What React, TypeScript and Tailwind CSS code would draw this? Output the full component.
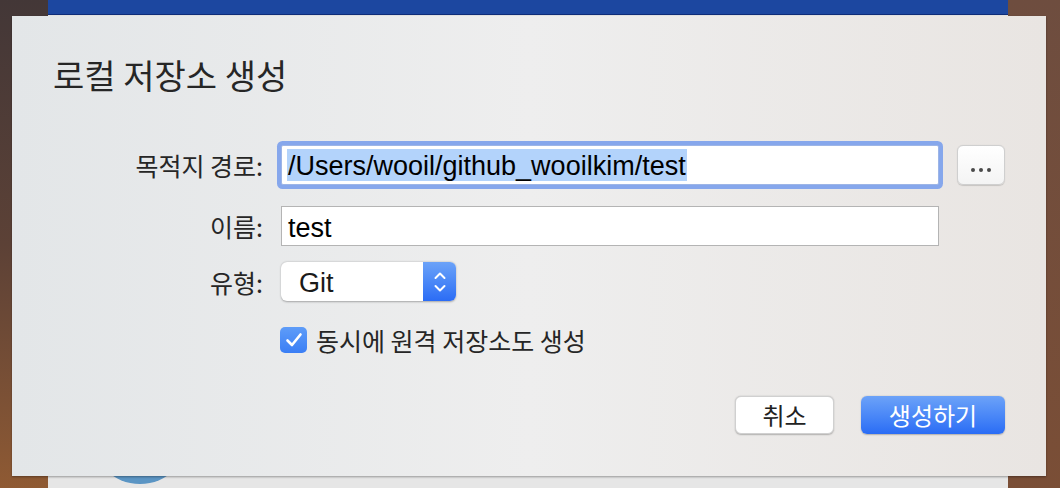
import React from 'react';

const KR = { fontFamily: '"Noto Sans CJK KR", "Noto Sans", sans-serif' };
const LATIN = { fontFamily: '"Liberation Sans", "Noto Sans CJK KR", sans-serif' };

const Chevrons = () => (
  <svg width="14" height="24" viewBox="0 0 14 24" fill="none" stroke="white" strokeWidth="2" strokeLinecap="round" strokeLinejoin="round">
    <path d="M2.5 8 L7 3.5 L11.5 8" />
    <path d="M2.5 16 L7 20.5 L11.5 16" />
  </svg>
);

const Check = () => (
  <svg width="18" height="16" viewBox="0 0 18 16" fill="none" stroke="white" strokeWidth="2.6" strokeLinecap="round" strokeLinejoin="round">
    <path d="M2.5 8.5 L7 13 L15.5 2.5" />
  </svg>
);

const Label: React.FC<{ children: React.ReactNode }> = ({ children }) => (
  <div className="w-[210px] shrink-0 text-right text-[25px] leading-[32px] text-[#262626]" style={KR}>
    {children}
  </div>
);

export default function App() {
  return (
    <div className="relative w-[1060px] h-[488px] overflow-hidden bg-gradient-to-b from-[#433737] via-[#5c4136] to-[#8f5a33]">
      {/* window behind the sheet */}
      <div className="absolute left-[48px] top-0 w-[960px] h-full bg-[#e6e6e6] overflow-hidden">
        <div className="h-[15px] bg-[#1c47a0] border-b border-[#0e2c78]" />
        <div className="absolute left-[42px] top-[384px] w-[100px] h-[100px] rounded-full bg-[#5b95c4]" />
      </div>
      <div className="absolute right-0 top-0 w-[52px] h-full bg-gradient-to-b from-[#6e4d3f] to-[#7a4e36]" />

      {/* sheet */}
      <div className="relative ml-[12px] mt-[16px] w-[1034px] h-[460px] bg-gradient-to-r from-[#e3e6e8] via-[#eeeeee] to-[#e9e5e2] shadow-[0_1px_2px_rgba(0,0,0,0.35)] pl-[41px] pr-[41px] pt-[39px]">
        <div className="text-[34px] leading-[40px] text-[#262626]" style={KR}>
          로컬 저장소 생성
        </div>

        <div className="mt-[50px] flex flex-col">
          {/* row 1 */}
          <div className="flex items-center h-[40px]">
            <Label>목적지 경로:</Label>
            <div className="ml-[18px] w-[658px] h-[40px] bg-white border border-[#9db5e6] rounded-[2px] shadow-[0_0_0_4px_#86a7ec] flex items-center pl-[5px]">
              <span className="bg-[#b3d3fb] text-[27px] leading-[29px] pt-[3px] text-black px-[1px]" style={LATIN}>
                /Users/wooil/github_wooilkim/test
              </span>
            </div>
            <div className="ml-[18px] w-[48px] h-[40px] rounded-[6px] bg-gradient-to-b from-white to-[#f4f4f4] border border-[#cfcfcf] shadow-[0_0.5px_1px_rgba(0,0,0,0.15)] flex items-end justify-center gap-[4px] pb-[12px]">
              <span className="w-[4px] h-[4px] rounded-full bg-[#4a4a4a]" />
              <span className="w-[4px] h-[4px] rounded-full bg-[#4a4a4a]" />
              <span className="w-[4px] h-[4px] rounded-full bg-[#4a4a4a]" />
            </div>
          </div>

          {/* row 2 */}
          <div className="mt-[21px] flex items-center h-[40px]">
            <Label>이름:</Label>
            <div className="ml-[18px] w-[658px] h-[40px] bg-white border border-[#b4b4b4] flex items-center pl-[6px] pt-[3px]">
              <span className="text-[27px] leading-[32px] text-black" style={LATIN}>test</span>
            </div>
          </div>

          {/* row 3 */}
          <div className="mt-[16px] flex items-center h-[39px]">
            <Label>유형:</Label>
            <div className="ml-[18px] w-[175px] h-[39px] rounded-[6px] bg-white shadow-[0_0.5px_2px_rgba(0,0,0,0.3)] flex overflow-hidden">
              <div className="flex-1 flex items-center pl-[18px] pt-[3px] text-[27px] text-[#1a1a1a]" style={LATIN}>
                Git
              </div>
              <div className="w-[33px] h-full bg-gradient-to-b from-[#6ba2f8] to-[#2b6cf5] flex items-center justify-center">
                <Chevrons />
              </div>
            </div>
          </div>

          {/* checkbox */}
          <div className="mt-[26px] flex items-center h-[26px] pl-[227px]">
            <div className="w-[27px] h-[26px] rounded-[5px] bg-gradient-to-b from-[#5e9cf8] to-[#3a7ef5] flex items-center justify-center">
              <Check />
            </div>
            <span className="ml-[9px] text-[25px] leading-[32px] text-[#262626]" style={KR}>
              동시에 원격 저장소도 생성
            </span>
          </div>

          {/* buttons */}
          <div className="mt-[43px] flex justify-end gap-[27px]">
            <button className="w-[99px] h-[38px] rounded-[6px] bg-white border border-[#d0d0d0] shadow-[0_0.5px_1.5px_rgba(0,0,0,0.25)] text-[24px] leading-[30px] text-[#222]" style={KR}>
              취소
            </button>
            <button className="w-[144px] h-[38px] rounded-[6px] bg-gradient-to-b from-[#6ca2f8] to-[#2a6cf5] shadow-[0_0.5px_1.5px_rgba(0,0,0,0.25)] text-[24px] leading-[30px] text-white" style={KR}>
              생성하기
            </button>
          </div>
        </div>
      </div>
    </div>
  );
}
